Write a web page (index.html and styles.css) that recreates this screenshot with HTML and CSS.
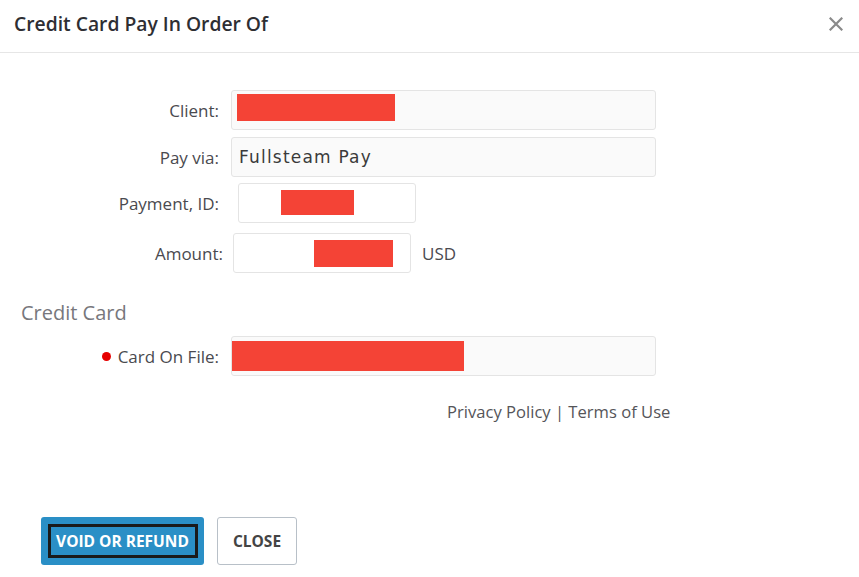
FILE: index.html
```html
<!DOCTYPE html>
<html>
<head>
<meta charset="utf-8">
<link rel="stylesheet" href="styles.css">
</head>
<body>
<div class="modal">
  <div class="header">
    <div class="title">Credit Card Pay In Order Of</div>
    <div class="close-x">
      <svg width="14" height="14" viewBox="0 0 14 14"><path d="M1.5 1.5 L12.5 12.5 M12.5 1.5 L1.5 12.5" stroke="#8a8a8a" stroke-width="2.2" stroke-linecap="square"/></svg>
    </div>
  </div>
  <div class="body">
    <div class="row r-client">
      <div class="label">Client:</div>
      <div class="input wide grey"><span class="redact rc"></span></div>
    </div>
    <div class="row r-pay">
      <div class="label">Pay via:</div>
      <div class="input wide grey"><span class="val">Fullsteam Pay</span></div>
    </div>
    <div class="row r-pid">
      <div class="label">Payment, ID:</div>
      <div class="input narrow pid"><span class="redact rp"></span></div>
    </div>
    <div class="row r-amt">
      <div class="label lamt">Amount:</div>
      <div class="input narrow amt"><span class="redact ra"></span></div>
      <div class="unit">USD</div>
    </div>
    <div class="section">Credit Card</div>
    <div class="row r-card">
      <div class="label"><span class="dot"></span>Card On File:</div>
      <div class="input wide grey"><span class="redact rcard"></span></div>
    </div>
    <div class="links">Privacy Policy | Terms of Use</div>
  </div>
  <div class="footer">
    <button class="btn primary"><span class="focus">VOID OR REFUND</span></button>
    <button class="btn secondary">CLOSE</button>
  </div>
</div>
</body>
</html>
```
FILE: styles.css
```css
html, body {
  margin: 0;
  padding: 0;
  background: #ffffff;
}
body {
  font-family: "Open Sans", Lato, sans-serif;
  color: #444;
  width: 859px;
  height: 577px;
  overflow: hidden;
}
.modal {
  display: flex;
  flex-direction: column;
  height: 577px;
}
.header {
  height: 53px;
  border-bottom: 1px solid #e6e6e6;
  display: flex;
  align-items: center;
  justify-content: space-between;
  padding: 0 16px 0 14px;
  box-sizing: border-box;
}
.title {
  font-size: 19.3px;
  font-weight: 600;
  color: #2e2e33;
  margin-top: -6px;
}
.close-x {
  width: 14px;
  height: 14px;
  margin-top: -4px;
  display: flex;
}
.body {
  display: flex;
  flex-direction: column;
  padding-top: 37px;
}
.row {
  display: flex;
  align-items: center;
}
.label {
  width: 220px;
  text-align: right;
  font-size: 17px;
  color: #4a4a4f;
  box-sizing: border-box;
  padding-right: 1px;
  display: flex;
  align-items: center;
  justify-content: flex-end;
}
.lamt { padding-right: 0; width: 223px; }
.input {
  height: 40px;
  box-sizing: border-box;
  border: 1px solid #e4e4e4;
  border-radius: 3px;
  background: #fff;
  position: relative;
  display: flex;
  align-items: center;
}
.grey { background: #fafafa; }
.wide { width: 425px; margin-left: 11px; }
.narrow { width: 178px; }
.pid { margin-left: 18px; }
.amt { margin-left: 10px; }
.r-client { height: 40px; }
.r-pay { height: 40px; margin-top: 7px; }
.r-pid { height: 40px; margin-top: 6px; }
.r-amt { height: 40px; margin-top: 10px; }
.r-card { height: 40px; margin-top: 11px; }
.val {
  font-family: "DejaVu Sans", Verdana, sans-serif;
  font-size: 17px;
  color: #3a3a3a;
  margin-left: 7px;
  letter-spacing: 1.2px;
}
.redact {
  background: #f44336;
  display: block;
  position: absolute;
}
.rc { left: 5px; top: 3px; width: 158px; height: 27px; }
.rp { left: 42px; top: 6px; width: 73px; height: 25px; }
.ra { left: 80px; top: 6px; width: 79px; height: 27px; }
.rcard { left: 0; top: 4px; width: 232px; height: 30px; }
.unit {
  margin-left: 11px;
  font-size: 17px;
  color: #4a4a4f;
}
.section {
  margin-top: 28px;
  margin-left: 21px;
  font-size: 20px;
  color: #77777c;
  height: 24px;
  line-height: 24px;
}
.dot {
  width: 9px;
  height: 9px;
  border-radius: 50%;
  background: #e60000;
  display: inline-block;
  margin-right: 7px;
}
.links {
  margin-top: 25px;
  margin-left: 447px;
  font-size: 16.6px;
  line-height: 22px;
  color: #555559;
}
.footer {
  margin-top: auto;
  padding: 0 0 12px 41px;
  display: flex;
  gap: 13px;
}
.btn {
  height: 48px;
  border-radius: 3px;
  font-family: "Open Sans", Lato, sans-serif;
  font-weight: 700;
  font-size: 15.5px;
  cursor: pointer;
  padding: 0;
}
.primary {
  width: 163px;
  background: #2a8fc6;
  border: none;
  color: #fff;
  display: flex;
  align-items: center;
  justify-content: center;
}
.focus {
  width: 150px;
  height: 34px;
  box-sizing: border-box;
  border: 3px solid #1a1a1a;
  display: flex;
  align-items: center;
  justify-content: center;
}
.secondary {
  width: 80px;
  background: #fff;
  border: 1px solid #b8c0c8;
  color: #444;
}
```
